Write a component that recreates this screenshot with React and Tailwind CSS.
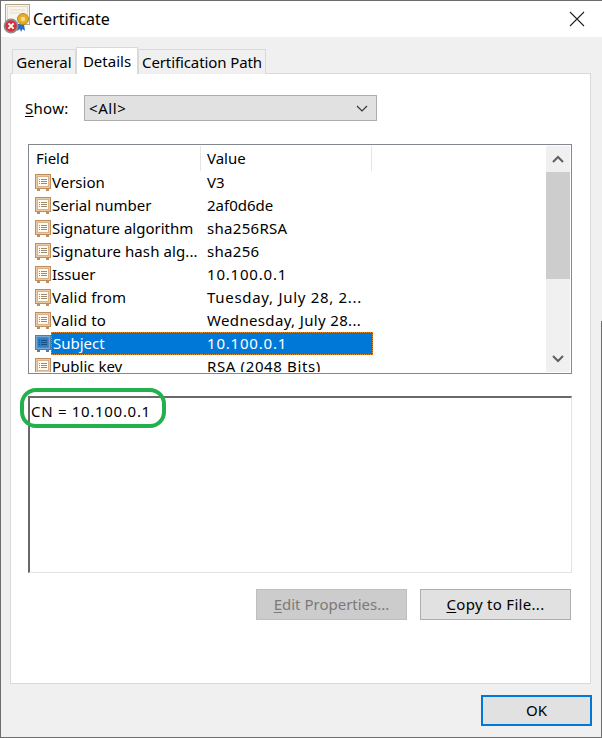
import React from 'react';

const FONT = { fontFamily: '"Noto Sans", "Open Sans", sans-serif' };

const fields = [
  { name: 'Version', value: 'V3', nameFit: '', valueFit: '' },
  { name: 'Serial number', value: '2af0d6de', nameFit: '', valueFit: '' },
  { name: 'Signature algorithm', value: 'sha256RSA', nameFit: '', valueFit: 'tracking-[0.3px]' },
  { name: 'Signature hash alg...', value: 'sha256', nameFit: 'tracking-[0.1px]', valueFit: 'tracking-[0.3px]' },
  { name: 'Issuer', value: '10.100.0.1', nameFit: '', valueFit: 'tracking-[0.8px]' },
  { name: 'Valid from', value: 'Tuesday, July 28, 2...', nameFit: 'tracking-[0.2px]', valueFit: 'tracking-[0.7px]' },
  { name: 'Valid to', value: 'Wednesday, July 28...', nameFit: 'tracking-[0.2px]', valueFit: 'tracking-[0.35px]' },
  { name: 'Subject', value: '10.100.0.1', nameFit: '', valueFit: 'tracking-[0.8px]' },
  { name: 'Public key', value: 'RSA (2048 Bits)', nameFit: '', valueFit: 'tracking-[0.63px]' },
];

function FieldIcon({ selected }) {
  const edge = selected ? '#4f7ea8' : '#c08d5e';
  const fill = selected ? '#7ba7cf' : '#edc9a3';
  const inner = selected ? '#2d80c8' : '#fffaf2';
  const line = selected ? '#174f80' : '#a08a6d';
  return (
    <svg width="16" height="17" viewBox="0 0 16 17" className="shrink-0">
      <rect x="0.5" y="0.5" width="15" height="14" fill={fill} stroke={edge} />
      <rect x="2.5" y="2.5" width="11" height="10" fill={inner} stroke={edge} strokeOpacity="0.55" />
      <path d="M4 5.5h1M6 5.5h6M4 7.5h1M6 7.5h6M4 9.5h1M6 9.5h6" stroke={line} strokeWidth="1" />
      <rect x="2" y="15" width="3" height="2" fill={edge} />
      <rect x="11" y="15" width="3" height="2" fill={edge} />
    </svg>
  );
}

function CertIcon() {
  return (
    <svg width="28" height="30" viewBox="0 0 28 30" className="shrink-0">
      <rect x="2.5" y="0.5" width="24" height="20" fill="#f8f5ee" stroke="#b5a48c" />
      <rect x="4.5" y="2.5" width="20" height="16" fill="none" stroke="#e2d9c9" />
      <path d="M7 6h15M7 9h10" stroke="#e2d9c9" strokeWidth="1" />
      <path d="M15 20l-1 7 3-2 1 3 1.5-3 2.5 2-1-7z" fill="#2a6cc6" />
      <circle cx="20" cy="15" r="5.5" fill="#e4ae28" stroke="#b78a1e" />
      <circle cx="20" cy="15" r="2.3" fill="#f5dc82" />
      <circle cx="8" cy="22" r="6.6" fill="#d6303c" stroke="#8f8f8f" strokeWidth="1.6" />
      <path d="M5.4 19.4l5.2 5.2M10.6 19.4l-5.2 5.2" stroke="#fff" strokeWidth="2" />
    </svg>
  );
}

function Underlined({ letter, rest }) {
  return (
    <>
      <span className="underline underline-offset-2">{letter}</span>
      {rest}
    </>
  );
}

export default function App() {
  return (
    <div
      className="relative flex h-[738px] w-[602px] flex-col overflow-hidden border-t border-b border-l border-[#6d6d6d] bg-[#f0f0f0] text-[15px] text-black"
      style={FONT}
    >
      {/* title bar */}
      <div className="flex h-[36px] shrink-0 items-center bg-white pl-[2px]">
        <CertIcon />
        <span className="ml-[2px] text-[16px]">Certificate</span>
        <svg width="16" height="16" viewBox="0 0 16 16" className="ml-auto mr-[17px]">
          <path d="M1 1l14 14M15 1L1 15" stroke="#222" strokeWidth="1.1" />
        </svg>
      </div>

      {/* tabs */}
      <div className="relative z-10 flex h-[36px] shrink-0 items-end pl-[11px]">
        <div className="mb-[-1px] flex h-[25px] w-[64px] items-center justify-center border border-b-0 border-[#d9d9d9] bg-[#f0f0f0]">General</div>
        <div className="relative z-10 mb-[-1px] flex h-[27px] w-[62px] items-center justify-center border border-b-0 border-[#d9d9d9] bg-white">Details</div>
        <div className="mb-[-1px] flex h-[25px] w-[128px] items-center justify-center border border-b-0 border-[#d9d9d9] bg-[#f0f0f0] tracking-[-0.1px]">Certification Path</div>
      </div>

      {/* panel */}
      <div className="ml-[9px] mr-[11px] flex h-[611px] shrink-0 flex-col border border-[#d9d9d9] bg-white pl-[17px] pr-[18px]">
        <div className="-ml-[3px] mt-[21px] flex h-[26px] items-center">
          <span className="w-[59px] tracking-[0.3px]"><Underlined letter="S" rest="how:" /></span>
          <div className="flex h-[26px] w-[293px] items-center border border-[#adadad] bg-[#e1e1e1] pl-[4px] pr-[8px]">
            <span className="tracking-[0.6px]">&lt;All&gt;</span>
            <svg width="12" height="7" viewBox="0 0 12 7" className="ml-auto">
              <path d="M1 1l5 5 5-5" fill="none" stroke="#333" strokeWidth="1.1" />
            </svg>
          </div>
        </div>

        {/* field list */}
        <div className="mt-[23px] flex h-[230px] w-[544px] overflow-hidden border border-[#828790] p-px">
          <div className="flex-1 overflow-hidden">
            <div className="flex h-[25px] items-center">
              <div className="h-[25px] w-[171px] border-r border-[#e5e5e5] pl-[6px] leading-[25px]">Field</div>
              <div className="h-[25px] w-[171px] border-r border-[#e5e5e5] pl-[6px] leading-[25px]">Value</div>
            </div>
            {fields.map(({ name, value, nameFit, valueFit }) => {
              const selected = name === 'Subject';
              return (
                <div key={name} className="flex h-[23px] items-center">
                  <div className="flex w-[171px] items-center pl-[5px]">
                    <FieldIcon selected={selected} />
                    {selected ? (
                      <span className="flex h-[23px] flex-1 items-center border-y border-l border-dotted border-[#e08a2e] bg-[#0078d7] pl-px text-white">{name}</span>
                    ) : (
                      <span className={`whitespace-nowrap pl-[1px] ${nameFit}`}>{name}</span>
                    )}
                  </div>
                  <div className={`h-[23px] w-[172px] whitespace-nowrap pl-[6px] ${valueFit} ${selected ? 'border-y border-r border-dotted border-[#e08a2e] bg-[#0078d7] leading-[21px] text-white' : 'leading-[23px]'}`}>{value}</div>
                </div>
              );
            })}
          </div>
          {/* scrollbar */}
          <div className="flex w-[24px] shrink-0 flex-col items-center bg-[#f0f0f0]">
            <div className="flex h-[26px] w-full items-center justify-center">
              <svg width="12" height="8" viewBox="0 0 12 8"><path d="M1 7l5-5 5 5" fill="none" stroke="#606060" strokeWidth="2" /></svg>
            </div>
            <div className="h-[107px] w-full bg-[#cdcdcd]" />
            <div className="mt-auto flex h-[26px] w-full items-center justify-center">
              <svg width="12" height="8" viewBox="0 0 12 8"><path d="M1 1l5 5 5-5" fill="none" stroke="#606060" strokeWidth="2" /></svg>
            </div>
          </div>
        </div>

        {/* detail text */}
        <div className="mt-[22px] h-[177px] w-[544px] border-t-2 border-r border-b border-l-2 border-t-[#696969] border-r-[#e3e3e3] border-b-[#e3e3e3] border-l-[#696969] pl-[1px] pt-[2px] tracking-[0.7px]">
          CN = 10.100.0.1
        </div>

        {/* actions */}
        <div className="mt-[16px] flex justify-end gap-[13px] pr-px">
          <div className="flex h-[31px] w-[151px] items-center justify-center border border-[#bfbfbf] bg-[#cccccc] text-[#7a7a7a]"><Underlined letter="E" rest="dit Properties..." /></div>
          <div className="flex h-[31px] w-[151px] items-center justify-center border border-[#adadad] bg-[#e1e1e1] tracking-[0.3px]"><Underlined letter="C" rest="opy to File..." /></div>
        </div>
      </div>

      {/* footer */}
      <div className="flex flex-1 items-start justify-end pr-[10px] pt-[11px]">
        <div className="flex h-[31px] w-[111px] items-center justify-center border-2 border-[#0078d7] bg-[#e1e1e1]">OK</div>
      </div>

      {/* window edge, only visible on the lower part */}
      <div className="absolute bottom-0 right-0 top-[320px] w-px bg-[#6d6d6d]" />

      {/* green annotation */}
      <div className="absolute left-[19px] top-[387px] h-[40px] w-[146px] rounded-[16px] border-4 border-[#22b14c]" />
    </div>
  );
}
